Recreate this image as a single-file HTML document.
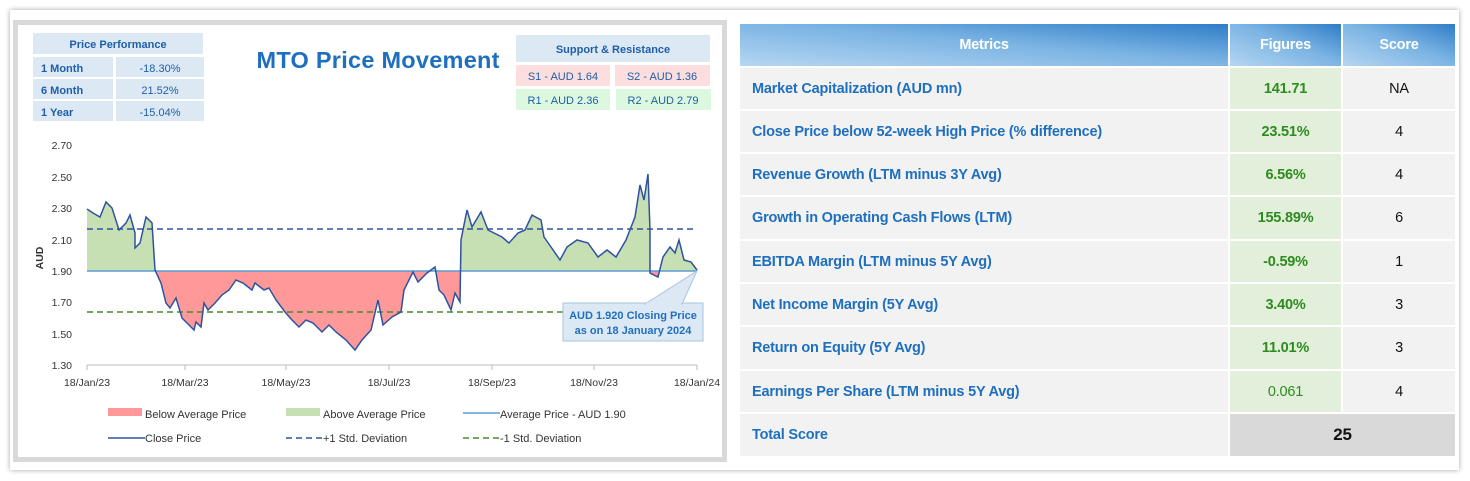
<!DOCTYPE html>
<html><head><meta charset="utf-8"><style>
body{margin:0;width:1470px;height:481px;background:#fff;font-family:"Liberation Sans",sans-serif;position:relative;overflow:hidden}
.card{position:absolute;left:10px;top:10px;width:1449px;height:460px;background:#fff;box-shadow:0 0 5px rgba(0,0,0,.35)}
.panel{position:absolute;left:13px;top:20px;width:704px;height:432px;border:5px solid #d9d9d9;background:#fff}
.c{position:absolute;box-sizing:border-box;display:flex;align-items:center;font-size:14.5px;font-weight:bold;letter-spacing:-0.2px}
.m{background:#f2f2f2;color:#1f6fbf;padding-left:12px}
.f{background:#e2efda;color:#2e8b1e;justify-content:center}
.s{background:#f2f2f2;color:#111;justify-content:center;font-weight:normal}
.h{color:#fff;justify-content:center;background:linear-gradient(to top right,#b5d6f2,#7ab3e3 55%,#2f7dc8)}
</style></head><body>
<div class="card"></div>
<div class="panel"></div>
<svg style="position:absolute;left:0;top:0" width="730" height="481" font-family="Liberation Sans,sans-serif">
<g font-size="11" font-weight="bold" fill="#1f5fa8">
<rect x="33" y="33" width="170" height="21" fill="#dce9f5"/><text x="118" y="48" text-anchor="middle">Price Performance</text>
<rect x="33" y="57" width="80" height="20" fill="#dce9f5"/><rect x="116" y="57" width="88" height="20" fill="#dce9f5"/>
<rect x="33" y="79" width="80" height="20" fill="#dce9f5"/><rect x="116" y="79" width="88" height="20" fill="#dce9f5"/>
<rect x="33" y="101" width="80" height="20" fill="#dce9f5"/><rect x="116" y="101" width="88" height="20" fill="#dce9f5"/>
<text x="41" y="72">1 Month</text><text x="41" y="94">6 Month</text><text x="41" y="116">1 Year</text>
<g font-weight="normal" text-anchor="middle"><text x="160" y="72">-18.30%</text><text x="160" y="94">21.52%</text><text x="160" y="116">-15.04%</text></g>
</g>
<text x="378" y="68" text-anchor="middle" font-size="23.5" font-weight="bold" fill="#1f6fbf" textLength="243">MTO Price Movement</text>
<g font-size="11" fill="#1f5fa8">
<rect x="516" y="35" width="194" height="27" fill="#dce9f5"/><text x="613" y="53" text-anchor="middle" font-weight="bold">Support &amp; Resistance</text>
<rect x="516" y="65" width="94" height="21" fill="#fddede"/><rect x="615" y="65" width="95" height="21" fill="#fddede"/>
<rect x="516" y="89" width="94" height="21" fill="#dcf8df"/><rect x="616" y="89" width="95" height="21" fill="#dcf8df"/>
<g text-anchor="middle"><text x="563" y="80">S1 - AUD 1.64</text><text x="662" y="80">S2 - AUD 1.36</text><text x="563" y="104">R1 - AUD 2.36</text><text x="663" y="104">R2 - AUD 2.79</text></g>
</g>
<g font-size="10.5" fill="#333" text-anchor="end">
<text x="72" y="149">2.70</text><text x="72" y="181">2.50</text><text x="72" y="212">2.30</text><text x="72" y="244">2.10</text><text x="72" y="275">1.90</text><text x="72" y="306">1.70</text><text x="72" y="338">1.50</text><text x="72" y="369">1.30</text>
</g>
<text transform="translate(43,258) rotate(-90)" font-size="10.5" font-weight="bold" fill="#333" text-anchor="middle">AUD</text>
<line x1="87" y1="365" x2="697" y2="365" stroke="#bbb"/>
<g stroke="#bbb"><line x1="87" y1="365" x2="87" y2="370"/><line x1="185" y1="365" x2="185" y2="370"/><line x1="286" y1="365" x2="286" y2="370"/><line x1="389" y1="365" x2="389" y2="370"/><line x1="492" y1="365" x2="492" y2="370"/><line x1="594" y1="365" x2="594" y2="370"/><line x1="697" y1="365" x2="697" y2="370"/></g>
<g font-size="10.5" fill="#333" text-anchor="middle">
<text x="87" y="386">18/Jan/23</text><text x="185" y="386">18/Mar/23</text><text x="286" y="386">18/May/23</text><text x="389" y="386">18/Jul/23</text><text x="492" y="386">18/Sep/23</text><text x="594" y="386">18/Nov/23</text><text x="697" y="386">18/Jan/24</text>
</g>
<defs>
<clipPath id="up"><rect x="80" y="100" width="630" height="171"/></clipPath>
<clipPath id="dn"><rect x="80" y="271" width="630" height="120"/></clipPath>
<polygon id="pp" points="87,271 87,209 93,213 100,217 106,202 112,208 119,230 126,223 130,215 135,233 135,248 140,243 146,217 152,223 155,270 161,283 166,303 170,308 176,298 182,318 191,327 194,330 196,322 201,327 204,303 208,310 215,303 222,295 229,290 236,280 243,283 252,290 255,283 264,290 269,288 276,300 285,312 292,320 299,327 306,320 313,323 322,332 329,325 336,332 346,340 355,350 362,340 371,330 378,300 383,325 392,317 401,312 404,290 413,272 418,282 427,273 435,267 439,290 444,295 451,310 455,293 460,302 461,240 467,210 472,227 481,212 488,230 502,237 509,243 518,233 525,230 532,215 541,220 544,237 551,247 560,260 567,247 577,240 588,243 598,257 607,250 616,257 626,240 635,217 640,185 644,200 648,174 650,230 650,273 658,277 663,257 670,247 675,253 679,240 684,260 691,262 697,270 697,271"/>
</defs>
<use href="#pp" fill="#c6e0b4" clip-path="url(#up)"/>
<use href="#pp" fill="#ff9999" clip-path="url(#dn)"/>
<line x1="87" y1="229" x2="697" y2="229" stroke="#2f52a0" stroke-width="1.5" stroke-dasharray="6,4"/>
<line x1="87" y1="312" x2="697" y2="312" stroke="#4a8a2a" stroke-width="1.5" stroke-dasharray="6,4"/>
<line x1="87" y1="271" x2="697" y2="271" stroke="#5b9bd5" stroke-width="1.5"/>
<polyline fill="none" stroke="#2f52a0" stroke-width="1.5" points="87,209 93,213 100,217 106,202 112,208 119,230 126,223 130,215 135,233 135,248 140,243 146,217 152,223 155,270 161,283 166,303 170,308 176,298 182,318 191,327 194,330 196,322 201,327 204,303 208,310 215,303 222,295 229,290 236,280 243,283 252,290 255,283 264,290 269,288 276,300 285,312 292,320 299,327 306,320 313,323 322,332 329,325 336,332 346,340 355,350 362,340 371,330 378,300 383,325 392,317 401,312 404,290 413,272 418,282 427,273 435,267 439,290 444,295 451,310 455,293 460,302 461,240 467,210 472,227 481,212 488,230 502,237 509,243 518,233 525,230 532,215 541,220 544,237 551,247 560,260 567,247 577,240 588,243 598,257 607,250 616,257 626,240 635,217 640,185 644,200 648,174 650,230 650,273 658,277 663,257 670,247 675,253 679,240 684,260 691,262 697,270"/>
<polygon points="563,303 703,303 703,341 563,341" fill="#dce9f5" stroke="#a9c4de"/>
<polygon points="645,304 697,271 682,304" fill="#dce9f5" stroke="#a9c4de"/>
<line x1="646" y1="304" x2="681" y2="304" stroke="#dce9f5" stroke-width="2"/>
<g font-size="11" font-weight="bold" fill="#1f6fbf" text-anchor="middle"><text x="633" y="319">AUD 1.920 Closing Price</text><text x="633" y="334">as on 18 January 2024</text></g>
<g font-size="11" fill="#333">
<rect x="108" y="408" width="34" height="8" fill="#ff9999"/><text x="145" y="418">Below Average Price</text>
<rect x="286" y="408" width="34" height="8" fill="#c6e0b4"/><text x="323" y="418">Above Average Price</text>
<line x1="463" y1="413" x2="500" y2="413" stroke="#5b9bd5" stroke-width="1.5"/><text x="500" y="418">Average Price - AUD 1.90</text>
<line x1="108" y1="438" x2="145" y2="438" stroke="#2f52a0" stroke-width="1.5"/><text x="145" y="442">Close Price</text>
<line x1="286" y1="438" x2="322" y2="438" stroke="#2f52a0" stroke-width="1.5" stroke-dasharray="6,4"/><text x="323" y="442">+1 Std. Deviation</text>
<line x1="463" y1="438" x2="499" y2="438" stroke="#4a8a2a" stroke-width="1.5" stroke-dasharray="6,4"/><text x="500" y="442">-1 Std. Deviation</text>
</g>
</svg>
<div class="c h" style="left:740px;top:24px;width:488px;height:42px">Metrics</div>
<div class="c h" style="left:1230px;top:24px;width:111px;height:42px">Figures</div>
<div class="c h" style="left:1343px;top:24px;width:112px;height:42px">Score</div>

<div class="c m" style="left:740px;top:68px;width:488px;height:41px">Market Capitalization (AUD mn)</div><div class="c f" style="left:1230px;top:68px;width:111px;height:41px">141.71</div><div class="c s" style="left:1343px;top:68px;width:112px;height:41px">NA</div>
<div class="c m" style="left:740px;top:111px;width:488px;height:41px">Close Price below 52-week High Price (% difference)</div><div class="c f" style="left:1230px;top:111px;width:111px;height:41px">23.51%</div><div class="c s" style="left:1343px;top:111px;width:112px;height:41px">4</div>
<div class="c m" style="left:740px;top:154px;width:488px;height:41px">Revenue Growth (LTM minus 3Y Avg)</div><div class="c f" style="left:1230px;top:154px;width:111px;height:41px">6.56%</div><div class="c s" style="left:1343px;top:154px;width:112px;height:41px">4</div>
<div class="c m" style="left:740px;top:197px;width:488px;height:42px">Growth in Operating Cash Flows (LTM)</div><div class="c f" style="left:1230px;top:197px;width:111px;height:42px">155.89%</div><div class="c s" style="left:1343px;top:197px;width:112px;height:42px">6</div>
<div class="c m" style="left:740px;top:241px;width:488px;height:41px">EBITDA Margin (LTM minus 5Y Avg)</div><div class="c f" style="left:1230px;top:241px;width:111px;height:41px">-0.59%</div><div class="c s" style="left:1343px;top:241px;width:112px;height:41px">1</div>
<div class="c m" style="left:740px;top:284px;width:488px;height:41px">Net Income Margin (5Y Avg)</div><div class="c f" style="left:1230px;top:284px;width:111px;height:41px">3.40%</div><div class="c s" style="left:1343px;top:284px;width:112px;height:41px">3</div>
<div class="c m" style="left:740px;top:327px;width:488px;height:42px">Return on Equity (5Y Avg)</div><div class="c f" style="left:1230px;top:327px;width:111px;height:42px">11.01%</div><div class="c s" style="left:1343px;top:327px;width:112px;height:42px">3</div>
<div class="c m" style="left:740px;top:371px;width:488px;height:41px">Earnings Per Share (LTM minus 5Y Avg)</div><div class="c f" style="left:1230px;top:371px;width:111px;height:41px;font-weight:normal">0.061</div><div class="c s" style="left:1343px;top:371px;width:112px;height:41px">4</div>
<div class="c m" style="left:740px;top:414px;width:488px;height:42px">Total Score</div><div class="c" style="left:1230px;top:414px;width:225px;height:42px;background:#d9d9d9;justify-content:center;font-size:17px;color:#111">25</div>
</body></html>
